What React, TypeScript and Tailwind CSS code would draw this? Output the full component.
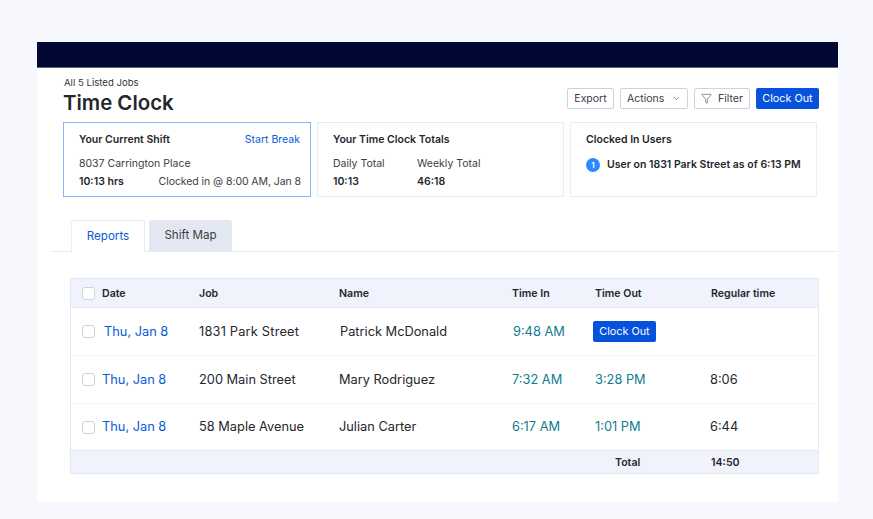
import { ChevronDown, Filter } from 'lucide-react';

const cols = 'grid grid-cols-[20px_97px_140px_173px_83px_115px_1fr] items-center pl-[11px]';

const rows = [
  { job: '200 Main Street', name: 'Mary Rodriguez', timeIn: '7:32 AM', timeOut: '3:28 PM', regular: '8:06', h: 'h-[48px]' },
  { job: '58 Maple Avenue', name: 'Julian Carter', timeIn: '6:17 AM', timeOut: '1:01 PM', regular: '6:44', h: 'h-[47px]' },
];

const Checkbox = () => (
  <span className="block w-[13px] h-[13px] rounded-[3px] border border-[#ccd3de] bg-white" />
);

const ClockOut = ({ className }: { className: string }) => (
  <button className={`rounded-[2px] bg-[#0652dd] text-white text-[10.8px] leading-none pt-[1px] ${className}`}>Clock Out</button>
);

const App = () => {
  return (
    <div className="w-[873px] h-[519px] bg-[#f6f8fd] pt-[42px] pl-[37px] text-[#25272c] font-['Inter',sans-serif] overflow-hidden">
      <div className="w-[801px] h-[460px] bg-white">
        <div className="h-[26px] bg-[#000833] border-b border-[#5d6278]" />

        <div className="flex items-start justify-between pl-[27px] pr-[19px] h-[54px]">
          <div>
            <p className="text-[9.6px] leading-[12px] mt-[9px] text-[#33353a]">All 5 Listed Jobs</p>
            <h1 className="text-[20.4px] leading-[26px] font-semibold mt-[1px] -ml-[1px]">Time Clock</h1>
          </div>
          <div className="flex items-center gap-[6px] mt-[20px] text-[10.5px] text-[#3a3d44]">
            <button className="h-[21px] w-[47px] rounded-[2px] border border-[#ccd3de] bg-white">Export</button>
            <button className="h-[21px] w-[68px] rounded-[2px] border border-[#ccd3de] bg-white flex items-center pl-[6px] gap-[8px]">
              Actions <ChevronDown size={9} strokeWidth={1.5} />
            </button>
            <button className="h-[21px] w-[56px] rounded-[2px] border border-[#ccd3de] bg-white flex items-center pl-[6px] gap-[6px]">
              <Filter size={11} strokeWidth={1.25} /> Filter
            </button>
            <ClockOut className="h-[21px] w-[63px]" />
          </div>
        </div>

        <div className="flex pl-[26px] gap-[6px] text-[10.5px]">
          <div className="w-[248px] h-[75px] border border-[#8ab4f8] pl-[15px] pr-[9px] pt-[10px]">
            <div className="flex justify-between leading-[14px]">
              <span className="font-semibold">Your Current Shift</span>
              <span className="text-[#0b5ad9] mr-[1px]">Start Break</span>
            </div>
            <p className="leading-[14px] mt-[10px] text-[#3a3d44]">8037 Carrington Place</p>
            <div className="flex justify-between leading-[14px] mt-[4px]">
              <span className="font-semibold">10:13 hrs</span>
              <span className="text-[#3a3d44] tracking-[-0.07px]">Clocked in @ 8:00 AM, Jan 8</span>
            </div>
          </div>

          <div className="w-[247px] h-[75px] border border-[#e9ecf5] px-[15px] pt-[10px]">
            <p className="font-semibold leading-[14px]">Your Time Clock Totals</p>
            <div className="flex mt-[10px] leading-[14px]">
              <div className="w-[84px]">
                <p className="text-[#3a3d44]">Daily Total</p>
                <p className="font-semibold mt-[4px]">10:13</p>
              </div>
              <div>
                <p className="text-[#3a3d44]">Weekly Total</p>
                <p className="font-semibold mt-[4px]">46:18</p>
              </div>
            </div>
          </div>

          <div className="w-[247px] h-[75px] border border-[#e9ecf5] px-[15px] pt-[10px]">
            <p className="font-semibold leading-[14px]">Clocked In Users</p>
            <div className="flex items-center gap-[7px] mt-[11px]">
              <span className="w-[14px] h-[14px] rounded-full bg-[#2b8cff] text-white text-[8px] font-semibold flex items-center justify-center">1</span>
              <span className="font-semibold leading-[14px] whitespace-nowrap">User on 1831 Park Street as of 6:13 PM</span>
            </div>
          </div>
        </div>

        <div className="flex items-end gap-[4px] mt-[23px] ml-[13px] pl-[21px] h-[32px] border-b border-[#e9ecf5] text-[11.6px]">
          <div className="w-[74px] h-[32px] -mb-px bg-white border border-b-0 border-[#e9ecf5] rounded-t-[3px] flex items-center justify-center text-[#0b5ad9]">Reports</div>
          <div className="w-[83px] h-[31px] bg-[#e2e7f1] rounded-t-[3px] flex items-center justify-center text-[#3a3d44]">Shift Map</div>
        </div>

        <div className="ml-[33px] mt-[26px] w-[749px] border border-[#e4e8f3] text-[12.8px]">
          <div className={`${cols} h-[29px] pt-[1px] bg-[#f0f3fb] border-b border-[#e4e8f3] text-[10.6px] font-semibold`}>
            <Checkbox />
            <span>Date</span>
            <span>Job</span>
            <span>Name</span>
            <span>Time In</span>
            <span>Time Out</span>
            <span className="ml-[1px]">Regular time</span>
          </div>

          <div className={`${cols} h-[47px]`}>
            <Checkbox />
            <span className="text-[#0b5ad9] ml-[2px]">Thu, Jan 8</span>
            <span className="tracking-[0.2px]">1831 Park Street</span>
            <span className="ml-[1px]">Patrick McDonald</span>
            <span className="text-[#0f7c8f] ml-[1px]">9:48 AM</span>
            <ClockOut className="h-[21px] w-[63px] -ml-[2px]" />
            <span />
          </div>

          {rows.map((row) => (
            <div key={row.job} className={`${cols} ${row.h} border-t border-[#f5f6fa]`}>
              <Checkbox />
              <span className="text-[#0b5ad9]">Thu, Jan 8</span>
              <span>{row.job}</span>
              <span>{row.name}</span>
              <span className="text-[#0f7c8f]">{row.timeIn}</span>
              <span className="text-[#0f7c8f]">{row.timeOut}</span>
              <span>{row.regular}</span>
            </div>
          ))}

          <div className={`${cols} h-[23px] pt-[1px] bg-[#f0f3fb] border-t border-[#e4e8f3] text-[10.6px] font-semibold`}>
            <span />
            <span />
            <span />
            <span />
            <span />
            <span className="ml-[20px]">Total</span>
            <span className="ml-[1px]">14:50</span>
          </div>
        </div>
      </div>
    </div>
  );
};

export default App;
